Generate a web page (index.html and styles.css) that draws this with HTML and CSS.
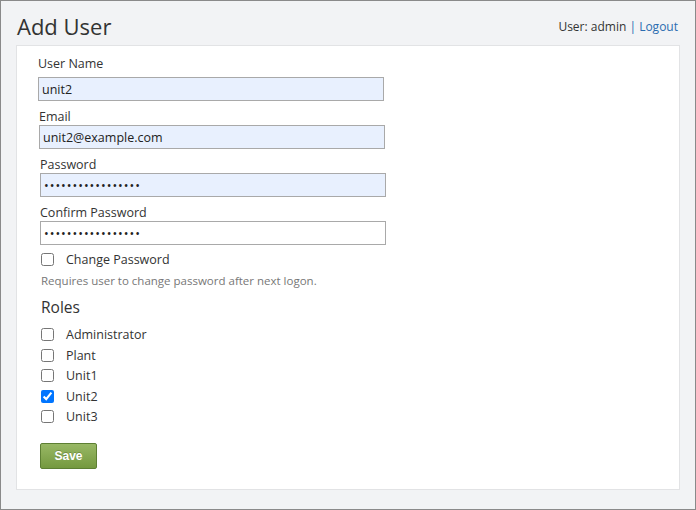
FILE: index.html
```html
<!DOCTYPE html>
<html>
<head>
<meta charset="utf-8">
<link rel="stylesheet" href="styles.css">
</head>
<body>
<div class="frame">
  <header class="top">
    <h1 class="title">Add User</h1>
    <div class="userbar">User: admin <span class="sep">|</span> <a class="link" href="#">Logout</a></div>
  </header>
  <main class="card">
    <form class="form">
      <div class="field f1">
        <label class="label">User Name</label>
        <input class="input auto" type="text" value="unit2">
      </div>
      <div class="field f2">
        <label class="label">Email</label>
        <input class="input auto" type="text" value="unit2@example.com">
      </div>
      <div class="field f3">
        <label class="label">Password</label>
        <input class="input auto pw" type="password" value="unit2password1234">
      </div>
      <div class="field f3">
        <label class="label">Confirm Password</label>
        <input class="input pw" type="password" value="unit2password1234">
      </div>
      <label class="check first"><input type="checkbox" class="cb"><span>Change Password</span></label>
      <p class="help">Requires user to change password after next logon.</p>
      <h2 class="roles">Roles</h2>
      <div class="rolelist">
        <label class="check"><input type="checkbox" class="cb"><span>Administrator</span></label>
        <label class="check"><input type="checkbox" class="cb"><span>Plant</span></label>
        <label class="check"><input type="checkbox" class="cb"><span>Unit1</span></label>
        <label class="check"><input type="checkbox" class="cb" checked><span>Unit2</span></label>
        <label class="check"><input type="checkbox" class="cb"><span>Unit3</span></label>
      </div>
      <button type="button" class="save">Save</button>
    </form>
  </main>
</div>
</body>
</html>
```
FILE: styles.css
```css
html, body {
  margin: 0;
  padding: 0;
}
body {
  font-family: "Open Sans", "Noto Sans", sans-serif;
  color: #333;
}
.frame {
  width: 696px;
  height: 510px;
  box-sizing: border-box;
  border: 1px solid #8a8a8a;
  background: #f2f3f5;
  padding: 0 15px;
  display: flex;
  flex-direction: column;
}
.top {
  display: flex;
  justify-content: space-between;
  align-items: flex-start;
  height: 44px;
}
.title {
  margin: 10px 0 0 1px;
  font-size: 22px;
  font-weight: 400;
  color: #333;
  line-height: 30px;
}
.userbar {
  margin: 17px 2px 0 0;
  font-size: 12px;
  color: #333;
}
.sep {
  color: #2b6cb0;
}
.link {
  color: #2b6cb0;
  text-decoration: none;
}
.card {
  background: #fff;
  border: 1px solid #e2e3e5;
  height: 445px;
  box-sizing: border-box;
  padding: 2px 21px 0;
}
.form {
  display: flex;
  flex-direction: column;
  align-items: flex-start;
}
.field {
  display: flex;
  flex-direction: column;
}
.f1 .label { margin-bottom: 5px; }
.f2 { margin-left: 1px; }
.f3 { margin-left: 2px; }
.label {
  font-size: 12.5px;
  line-height: 16px;
  color: #333;
  margin: 8px 0 0;
}
.input {
  width: 346px;
  height: 24px;
  box-sizing: border-box;
  border: 1px solid #a9a9a9;
  background: #fff;
  font-family: "Open Sans", sans-serif;
  font-size: 12.5px;
  color: #222;
  padding: 0 3px;
  margin: 0;
}
.pw {
  letter-spacing: 1px;
}
.auto {
  background: #e8f0fe;
}
.check {
  display: flex;
  align-items: center;
  font-size: 12.5px;
  height: 20.5px;
  margin-left: 3px;
  color: #333;
}
.check.first {
  margin-top: 4px;
}
.cb {
  width: 13px;
  height: 13px;
  margin: 0 12px 0 0;
  accent-color: #0075ff;
}
.help {
  margin: 3px 0 0 3px;
  font-size: 11.5px;
  color: #777;
}
.roles {
  margin: 8px 0 7px 3px;
  font-size: 15.5px;
  font-weight: 400;
  color: #333;
}
.rolelist {
  display: flex;
  flex-direction: column;
}
.save {
  margin: 16px 0 0 2px;
  width: 57px;
  height: 26px;
  border: 1px solid #5d7f33;
  border-radius: 2px;
  background: linear-gradient(#98b865, #74993f);
  color: #fff;
  font-family: "Liberation Sans", Arial, sans-serif;
  font-size: 12px;
  font-weight: 700;
  text-shadow: 0 -1px 0 rgba(0,0,0,0.2);
  padding: 0;
}
```
